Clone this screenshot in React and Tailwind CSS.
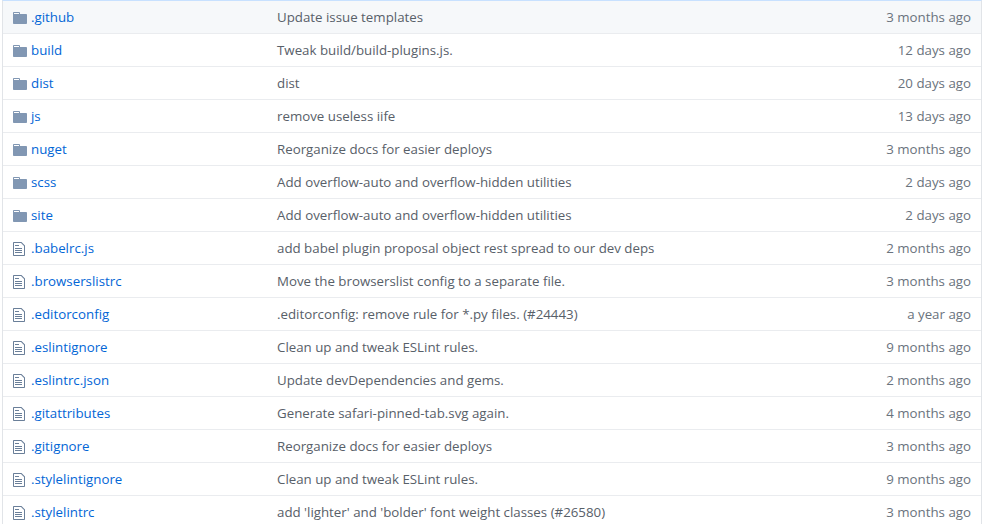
const files = [
  { name: ".github", type: "dir", message: "Update issue templates", age: "3 months ago" },
  { name: "build", type: "dir", message: "Tweak build/build-plugins.js.", age: "12 days ago" },
  { name: "dist", type: "dir", message: "dist", age: "20 days ago" },
  { name: "js", type: "dir", message: "remove useless iife", age: "13 days ago" },
  { name: "nuget", type: "dir", message: "Reorganize docs for easier deploys", age: "3 months ago" },
  { name: "scss", type: "dir", message: "Add overflow-auto and overflow-hidden utilities", age: "2 days ago" },
  { name: "site", type: "dir", message: "Add overflow-auto and overflow-hidden utilities", age: "2 days ago" },
  { name: ".babelrc.js", type: "file", message: "add babel plugin proposal object rest spread to our dev deps", age: "2 months ago" },
  { name: ".browserslistrc", type: "file", message: "Move the browserslist config to a separate file.", age: "3 months ago" },
  { name: ".editorconfig", type: "file", message: ".editorconfig: remove rule for *.py files. (#24443)", age: "a year ago" },
  { name: ".eslintignore", type: "file", message: "Clean up and tweak ESLint rules.", age: "9 months ago" },
  { name: ".eslintrc.json", type: "file", message: "Update devDependencies and gems.", age: "2 months ago" },
  { name: ".gitattributes", type: "file", message: "Generate safari-pinned-tab.svg again.", age: "4 months ago" },
  { name: ".gitignore", type: "file", message: "Reorganize docs for easier deploys", age: "3 months ago" },
  { name: ".stylelintignore", type: "file", message: "Clean up and tweak ESLint rules.", age: "9 months ago" },
  { name: ".stylelintrc", type: "file", message: "add 'lighter' and 'bolder' font weight classes (#26580)", age: "3 months ago" },
];

const FolderIcon = () => (
  <svg width="14" height="16" viewBox="0 0 14 16" fill="#8197b3">
    <path fillRule="evenodd" d="M13 4H7V3c0-.66-.31-1-1-1H1c-.55 0-1 .45-1 1v10c0 .55.45 1 1 1h12c.55 0 1-.45 1-1V5c0-.55-.45-1-1-1zM6 4H1V3h5v1z" />
  </svg>
);

const FileIcon = () => (
  <svg width="12" height="16" viewBox="0 0 12 16" fill="#6a7f99">
    <path fillRule="evenodd" d="M6 5H2V4h4v1zM2 8h7V7H2v1zm0 2h7V9H2v1zm0 2h7v-1H2v1zm10-7.5V14c0 .55-.45 1-1 1H1c-.55 0-1-.45-1-1V2c0-.55.45-1 1-1h7.5L12 4.5zM11 5L8 2H1v12h10V5z" />
  </svg>
);

const App = () => {
  return (
    <div className="h-[524px] overflow-hidden bg-white pl-[2px] pr-[18px] font-['Open_Sans',sans-serif] text-[13.3px]">
      <div className="border-x border-t border-x-[#e1e4e8] border-t-[#c8e1ff]">
        {files.map((file, i) => (
          <div
            key={file.name}
            className={`flex h-[33px] items-center border-b border-[#eaecef] pl-[10px] pr-[10px] pt-[2px] ${i === 0 ? "bg-[#f6f8fa]" : "bg-white"}`}
          >
            <div className="flex w-[18px] justify-start">
              {file.type === "dir" ? <FolderIcon /> : <FileIcon />}
            </div>
            <div className="w-[246px] text-[#0366d6]">{file.name}</div>
            <div className="flex-1 text-[#586069]">{file.message}</div>
            <div className="text-right text-[#6a737d]">{file.age}</div>
          </div>
        ))}
      </div>
    </div>
  );
};

export default App;
